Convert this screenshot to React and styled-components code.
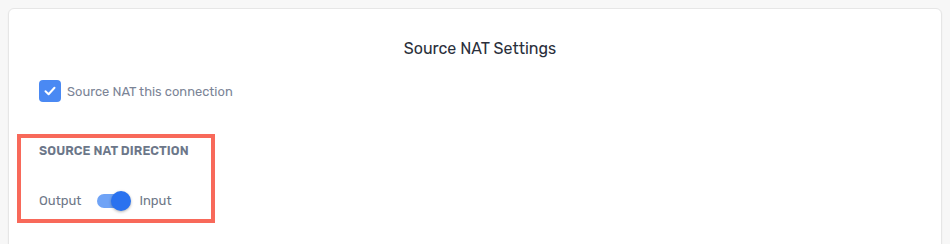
import React from "react";
import styled, { createGlobalStyle } from "styled-components";

const Global = createGlobalStyle`
  html, body { margin: 0; padding: 0; background: #f7f7f7; }
  body { font-family: "Rubik", Inter, "Noto Sans", sans-serif; }
`;

const Page = styled.div`
  padding: 8px 8px 0 8px;
  height: 244px;
  box-sizing: border-box;
  overflow: hidden;
`;

const Card = styled.section`
  background: #fff;
  border: 1px solid #e6e6e6;
  border-radius: 6px;
  box-shadow: 0 1px 2px rgba(0, 0, 0, 0.05);
  padding: 30px 30px 40px;
  min-height: 260px;
  box-sizing: border-box;
`;

const Title = styled.h2`
  margin: 0;
  padding-left: 10px;
  text-align: center;
  font-size: 16px;
  line-height: 20px;
  font-weight: 400;
  color: #2a2f3b;
`;

const CheckRow = styled.label`
  display: flex;
  align-items: center;
  gap: 6px;
  margin-top: 21px;
  font-size: 12.9px;
  color: #7b8496;
`;

const Box = styled.span`
  width: 22px;
  height: 22px;
  border-radius: 4px;
  background: ${(p) => (p.$checked ? "#4a89f3" : "#fff")};
  display: inline-flex;
  align-items: center;
  justify-content: center;
`;

const Highlight = styled.div`
  margin: 32px 0 0 -22px;
  width: 198px;
  box-sizing: border-box;
  border: 4px solid #f8695a;
  padding: 5px 18px 8px;
`;

const SectionLabel = styled.div`
  font-size: 12.5px;
  line-height: 16px;
  font-weight: 600;
  color: #6c7789;
  letter-spacing: 0.1px;
  white-space: nowrap;
`;

const SwitchRow = styled.div`
  display: flex;
  align-items: center;
  margin-top: 31px;
  font-size: 13px;
  color: #6f7888;
  height: 21px;
`;

const Track = styled.span`
  position: relative;
  width: 32px;
  height: 14px;
  border-radius: 7px;
  background: #6fa3f6;
  margin: 0 10px 0 16px;
  flex: none;
`;

const Thumb = styled.span`
  position: absolute;
  top: -3px;
  left: ${(p) => (p.$on ? "14px" : "-3px")};
  width: 20px;
  height: 20px;
  border-radius: 50%;
  background: #2a72ef;
  box-shadow: 0 1px 3px rgba(0, 0, 0, 0.3);
`;

export default function App() {
  return (
    <>
      <Global />
      <Page>
        <Card>
          <Title>Source NAT Settings</Title>
          <CheckRow>
            <Box $checked>
              <svg width="14" height="14" viewBox="0 0 14 14">
                <path d="M2.5 7.3 L5.6 10.2 L11.5 3.8" fill="none" stroke="#fff" strokeWidth="2" strokeLinecap="round" strokeLinejoin="round" />
              </svg>
            </Box>
            Source NAT this connection
          </CheckRow>
          <Highlight>
            <SectionLabel>SOURCE NAT DIRECTION</SectionLabel>
            <SwitchRow>
              Output
              <Track>
                <Thumb $on />
              </Track>
              Input
            </SwitchRow>
          </Highlight>
        </Card>
      </Page>
    </>
  );
}
